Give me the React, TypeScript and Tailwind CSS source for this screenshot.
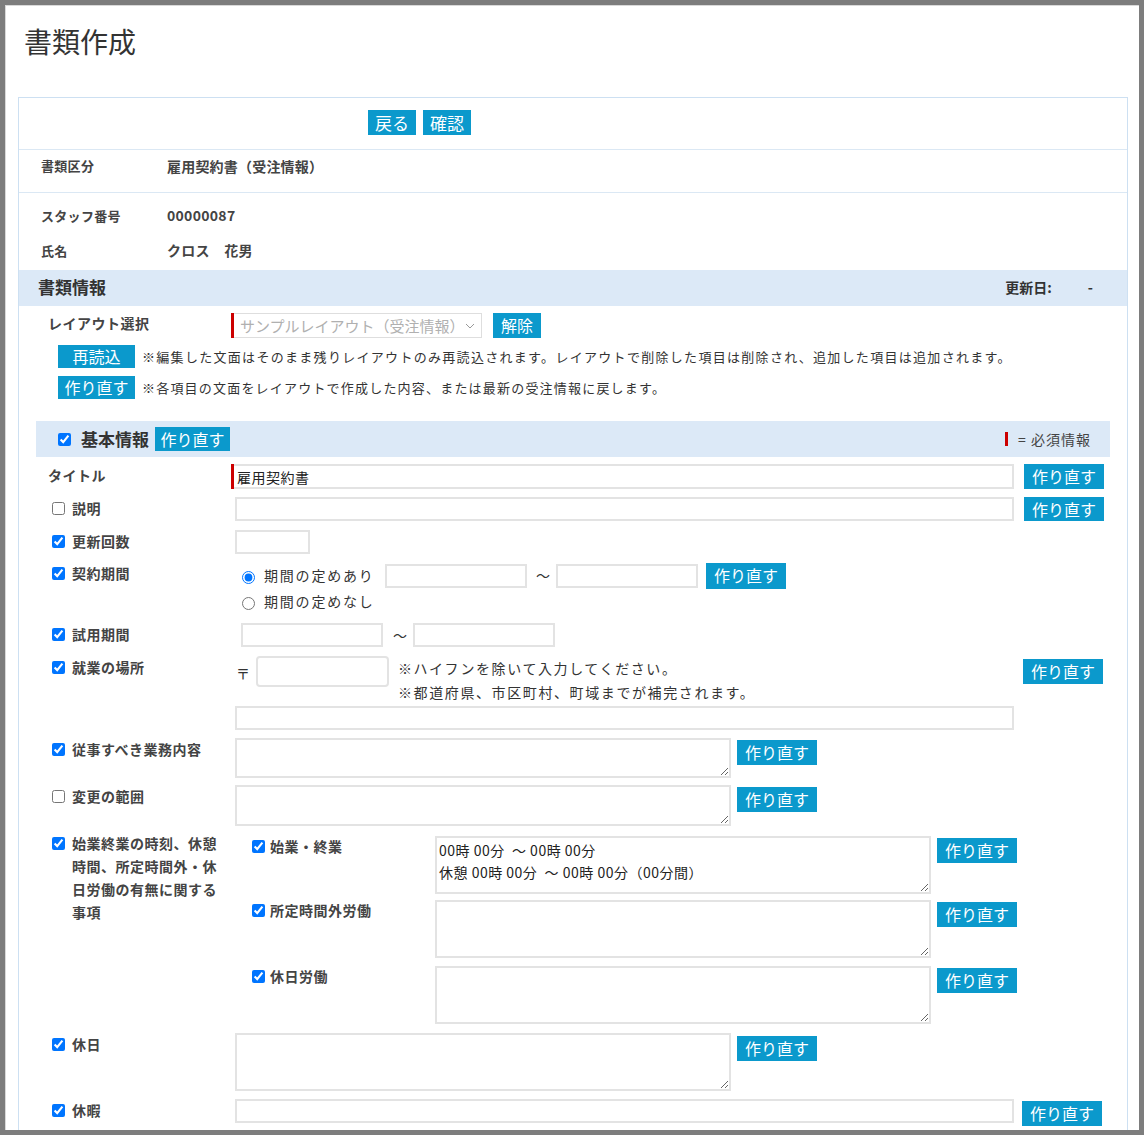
import React from "react";

type BtnProps = { children: React.ReactNode; w: string; h?: string; text?: string; className?: string };
const Btn = ({ children, w, h = "h-[25px]", text = "text-[16px]", className = "" }: BtnProps) => (
  <div className={`${w} ${h} ${text} ${className} shrink-0 flex items-center justify-center bg-[#0b99cc] text-white leading-none pb-[1px]`}>
    {children}
  </div>
);

const Cb = ({ checked }: { checked: boolean }) => (
  <input type="checkbox" defaultChecked={checked} className="m-0 w-[13px] h-[13px] shrink-0" />
);

const Label = ({ cb, children }: { cb?: boolean; children: React.ReactNode }) => (
  <div className={`w-[195px] shrink-0 flex items-start gap-[7px] ${cb === undefined ? "pl-[12px]" : "pl-[16px]"}`}>
    {cb !== undefined && (
      <div className="h-[23px] flex items-center">
        <Cb checked={cb} />
      </div>
    )}
    <div className="text-[14px] leading-[23px] font-bold text-[#444] tracking-[0.5px]">{children}</div>
  </div>
);

const inputCls = "block border-2 border-[#e3e3e3] bg-white outline-none text-[14px] text-[#222]";

const SubRow = ({ label, top, value }: { label: string; top: string; value?: string }) => (
  <div className={`flex items-start ${top}`}>
    <div className="w-[204px] shrink-0 flex items-start gap-[5px] pl-[21px]">
      <div className="h-[20px] flex items-center">
        <Cb checked={true} />
      </div>
      <div className="text-[14px] leading-[20px] font-bold text-[#444] tracking-[0.5px]">{label}</div>
    </div>
    <textarea
      readOnly
      defaultValue={value}
      className={`${inputCls} w-[496px] h-[58px] px-[2px] py-[1px] leading-[22px] tracking-[0.5px]`}
    />
    <Btn w="w-[80px]" className="ml-[6px] mt-[2px]">作り直す</Btn>
  </div>
);

export default function App() {
  return (
    <div className="w-[1144px] h-[1135px] border-[5px] border-[#7d7d7d] bg-white overflow-hidden font-['Noto_Sans_CJK_JP',sans-serif] text-[#333]">
      <div className="h-full border-t border-l border-[#d9d9d9]">
        <div className="pl-[18px] pt-[17px] text-[28px] leading-[36px] text-[#333] font-normal">書類作成</div>

        <div className="ml-[12px] mt-[38px] w-[1110px] border border-[#cde0f2]">
          {/* top buttons */}
          <div className="h-[52px] border-b border-[#dbe8f4] pl-[349px] pt-[12px] flex gap-[7px]">
            <Btn w="w-[48px]" text="text-[17px]">戻る</Btn>
            <Btn w="w-[48px]" text="text-[17px]">確認</Btn>
          </div>
          {/* 書類区分 */}
          <div className="h-[43px] border-b border-[#dbe8f4] pt-[6px] pl-[22px] flex font-bold text-[#444] leading-[20px]">
            <div className="w-[126px] text-[13px] tracking-[0.3px]">書類区分</div>
            <div className="text-[14px] tracking-[0.2px]">雇用契約書（受注情報）</div>
          </div>
          {/* staff */}
          <div className="pt-[5px] pb-[2px] pl-[22px] font-bold text-[#444]">
            <div className="h-[35px] flex items-center">
              <div className="w-[126px] text-[13px] tracking-[0.3px]">スタッフ番号</div>
              <div className="text-[14px] tracking-[0.3px]">00000087</div>
            </div>
            <div className="h-[35px] flex items-center">
              <div className="w-[126px] text-[13px] tracking-[0.3px]">氏名</div>
              <div className="text-[14px] tracking-[0.3px]">クロス　花男</div>
            </div>
          </div>
          {/* 書類情報 header */}
          <div className="h-[36px] bg-[#dce9f7] flex items-center pl-[19px] pr-[34px] pb-[2px]">
            <div className="text-[17px] font-bold text-[#333]">書類情報</div>
            <div className="ml-auto text-[14px] font-bold text-[#333]">更新日:</div>
            <div className="ml-[36px] text-[14px] font-bold text-[#333]">-</div>
          </div>

          <div className="px-[17px]">
            {/* layout select */}
            <div className="mt-[7px] flex items-start">
              <div className="w-[195px] shrink-0 pl-[12px] text-[14px] leading-[20px] font-bold text-[#444] tracking-[0.5px]">レイアウト選択</div>
              <div className="w-[251px] h-[25px] flex">
                <div className="w-[3px] h-full bg-[#cc0000]" />
                <div className="flex-1 border border-l-0 border-[#dedede] flex items-center pl-[6px] pr-[6px]">
                  <span className="text-[15px] text-[#b0b0b0] leading-none whitespace-nowrap">サンプルレイアウト（受注情報）</span>
                  <svg className="ml-auto" width="10" height="6" viewBox="0 0 10 6">
                    <path d="M1 1l4 4 4-4" fill="none" stroke="#999" strokeWidth="1" />
                  </svg>
                </div>
              </div>
              <Btn w="w-[48px]" className="ml-[11px]">解除</Btn>
            </div>
            <div className="mt-[7px] pl-[22px] flex items-center">
              <Btn w="w-[77px]" h="h-[23px]">再読込</Btn>
              <div className="ml-[7px] text-[13px] tracking-[1.3px] text-[#333] whitespace-nowrap">
                ※編集した文面はそのまま残りレイアウトのみ再読込されます。レイアウトで削除した項目は削除され、追加した項目は追加されます。
              </div>
            </div>
            <div className="mt-[8px] pl-[22px] flex items-center">
              <Btn w="w-[77px]" h="h-[23px]">作り直す</Btn>
              <div className="ml-[7px] text-[13px] tracking-[1.2px] text-[#333] whitespace-nowrap">
                ※各項目の文面をレイアウトで作成した内容、または最新の受注情報に戻します。
              </div>
            </div>

            {/* 基本情報 header */}
            <div className="mt-[22px] h-[36px] bg-[#dce9f7] flex items-center pl-[22px] pr-[19px]">
              <Cb checked={true} />
              <div className="ml-[10px] text-[17px] font-bold text-[#333]">基本情報</div>
              <Btn w="w-[75px]" h="h-[24px]" className="ml-[6px]">作り直す</Btn>
              <div className="ml-auto w-[3px] h-[14px] bg-[#cc0000]" />
              <div className="ml-[10px] text-[14px] tracking-[1px] text-[#444]">= 必須情報</div>
            </div>

            {/* タイトル */}
            <div className="mt-[7px] flex items-start">
              <Label>タイトル</Label>
              <div className="flex h-[25px]">
                <div className="w-[3px] h-full bg-[#cc0000]" />
                <input readOnly defaultValue="雇用契約書" className={`${inputCls} w-[780px] h-[25px] pl-[3px] border-l-0 tracking-[0.5px]`} />
              </div>
              <Btn w="w-[80px]" className="ml-[10px]">作り直す</Btn>
            </div>

            {/* 説明 */}
            <div className="mt-[8px] flex items-start">
              <Label cb={false}>説明</Label>
              <input readOnly className={`${inputCls} ml-[4px] w-[779px] h-[24px]`} />
              <Btn w="w-[80px]" h="h-[24px]" className="ml-[10px]">作り直す</Btn>
            </div>

            {/* 更新回数 */}
            <div className="mt-[9px] flex items-start">
              <Label cb={true}>更新回数</Label>
              <input readOnly className={`${inputCls} ml-[4px] w-[75px] h-[24px]`} />
            </div>

            {/* 契約期間 */}
            <div className="mt-[8px] flex items-start">
              <Label cb={true}>契約期間</Label>
              <div className="flex flex-col">
                <div className="h-[27px] flex items-center">
                  <input type="radio" name="period" defaultChecked className="m-0 ml-[11px] w-[13px] h-[13px] mt-[4px]" />
                  <span className="ml-[9px] w-[110px] text-[14px] tracking-[1.8px] text-[#333] whitespace-nowrap">期間の定めあり</span>
                  <input readOnly className={`${inputCls} ml-[11px] w-[142px] h-[24px]`} />
                  <span className="w-[29px] pl-[9px] text-[14px] text-[#333]">〜</span>
                  <input readOnly className={`${inputCls} w-[142px] h-[24px]`} />
                  <Btn w="w-[80px]" h="h-[26px]" className="ml-[8px]">作り直す</Btn>
                </div>
                <div className="h-[24px] flex items-center">
                  <input type="radio" name="period" className="m-0 ml-[11px] w-[13px] h-[13px] mt-[4px]" />
                  <span className="ml-[9px] text-[14px] tracking-[1.8px] text-[#333] whitespace-nowrap">期間の定めなし</span>
                </div>
              </div>
            </div>

            {/* 試用期間 */}
            <div className="mt-[10px] flex items-start">
              <Label cb={true}>試用期間</Label>
              <div className="flex items-center h-[24px]">
                <input readOnly className={`${inputCls} ml-[10px] w-[142px] h-[24px]`} />
                <span className="w-[30px] pl-[10px] text-[14px] text-[#333]">〜</span>
                <input readOnly className={`${inputCls} w-[142px] h-[24px]`} />
              </div>
            </div>

            {/* 就業の場所 */}
            <div className="mt-[9px] flex items-start">
              <Label cb={true}>就業の場所</Label>
              <div className="flex-1 flex flex-col">
                <div className="flex items-start h-[48px]">
                  <span className="ml-[5px] mt-[7px] w-[20px] text-[14px] text-[#333] leading-[20px]">〒</span>
                  <input readOnly className={`${inputCls} w-[133px] h-[31px] rounded-[4px]`} />
                  <div className="ml-[9px] text-[14px] tracking-[1.6px] leading-[24px] text-[#333] whitespace-nowrap">
                    <div>※ハイフンを除いて入力してください。</div>
                    <div>※都道府県、市区町村、町域までが補完されます。</div>
                  </div>
                  <Btn w="w-[80px]" className="ml-auto mr-[7px] mt-[3px]">作り直す</Btn>
                </div>
                <input readOnly className={`${inputCls} ml-[4px] mt-[2px] w-[779px] h-[24px]`} />
              </div>
            </div>

            {/* 従事すべき業務内容 */}
            <div className="mt-[8px] flex items-start">
              <Label cb={true}>従事すべき業務内容</Label>
              <textarea readOnly className={`${inputCls} ml-[4px] w-[496px] h-[40px]`} />
              <Btn w="w-[80px]" className="ml-[6px] mt-[2px]">作り直す</Btn>
            </div>

            {/* 変更の範囲 */}
            <div className="mt-[7px] flex items-start">
              <Label cb={false}>変更の範囲</Label>
              <textarea readOnly className={`${inputCls} ml-[4px] w-[496px] h-[41px]`} />
              <Btn w="w-[80px]" className="ml-[6px] mt-[2px]">作り直す</Btn>
            </div>

            {/* 始業終業 */}
            <div className="mt-[6px] flex items-start">
              <Label cb={true}>
                始業終業の時刻、休憩
                <br />
                時間、所定時間外・休
                <br />
                日労働の有無に関する
                <br />
                事項
              </Label>
              <div className="flex flex-col pt-[4px]">
                <SubRow label="始業・終業" top="" value={"00時 00分  ～ 00時 00分\n休憩 00時 00分  ～ 00時 00分（00分間）"} />
                <SubRow label="所定時間外労働" top="mt-[6px]" />
                <SubRow label="休日労働" top="mt-[8px]" />
              </div>
            </div>

            {/* 休日 */}
            <div className="mt-[9px] flex items-start">
              <Label cb={true}>休日</Label>
              <textarea readOnly className={`${inputCls} ml-[4px] w-[496px] h-[58px]`} />
              <Btn w="w-[80px]" className="ml-[6px] mt-[3px]">作り直す</Btn>
            </div>

            {/* 休暇 */}
            <div className="mt-[8px] flex items-start">
              <Label cb={true}>休暇</Label>
              <input readOnly className={`${inputCls} ml-[4px] w-[779px] h-[24px]`} />
              <Btn w="w-[80px]" className="ml-[8px] mt-[2px]">作り直す</Btn>
            </div>
            <div className="h-[40px]" />
          </div>
        </div>
      </div>
    </div>
  );
}
